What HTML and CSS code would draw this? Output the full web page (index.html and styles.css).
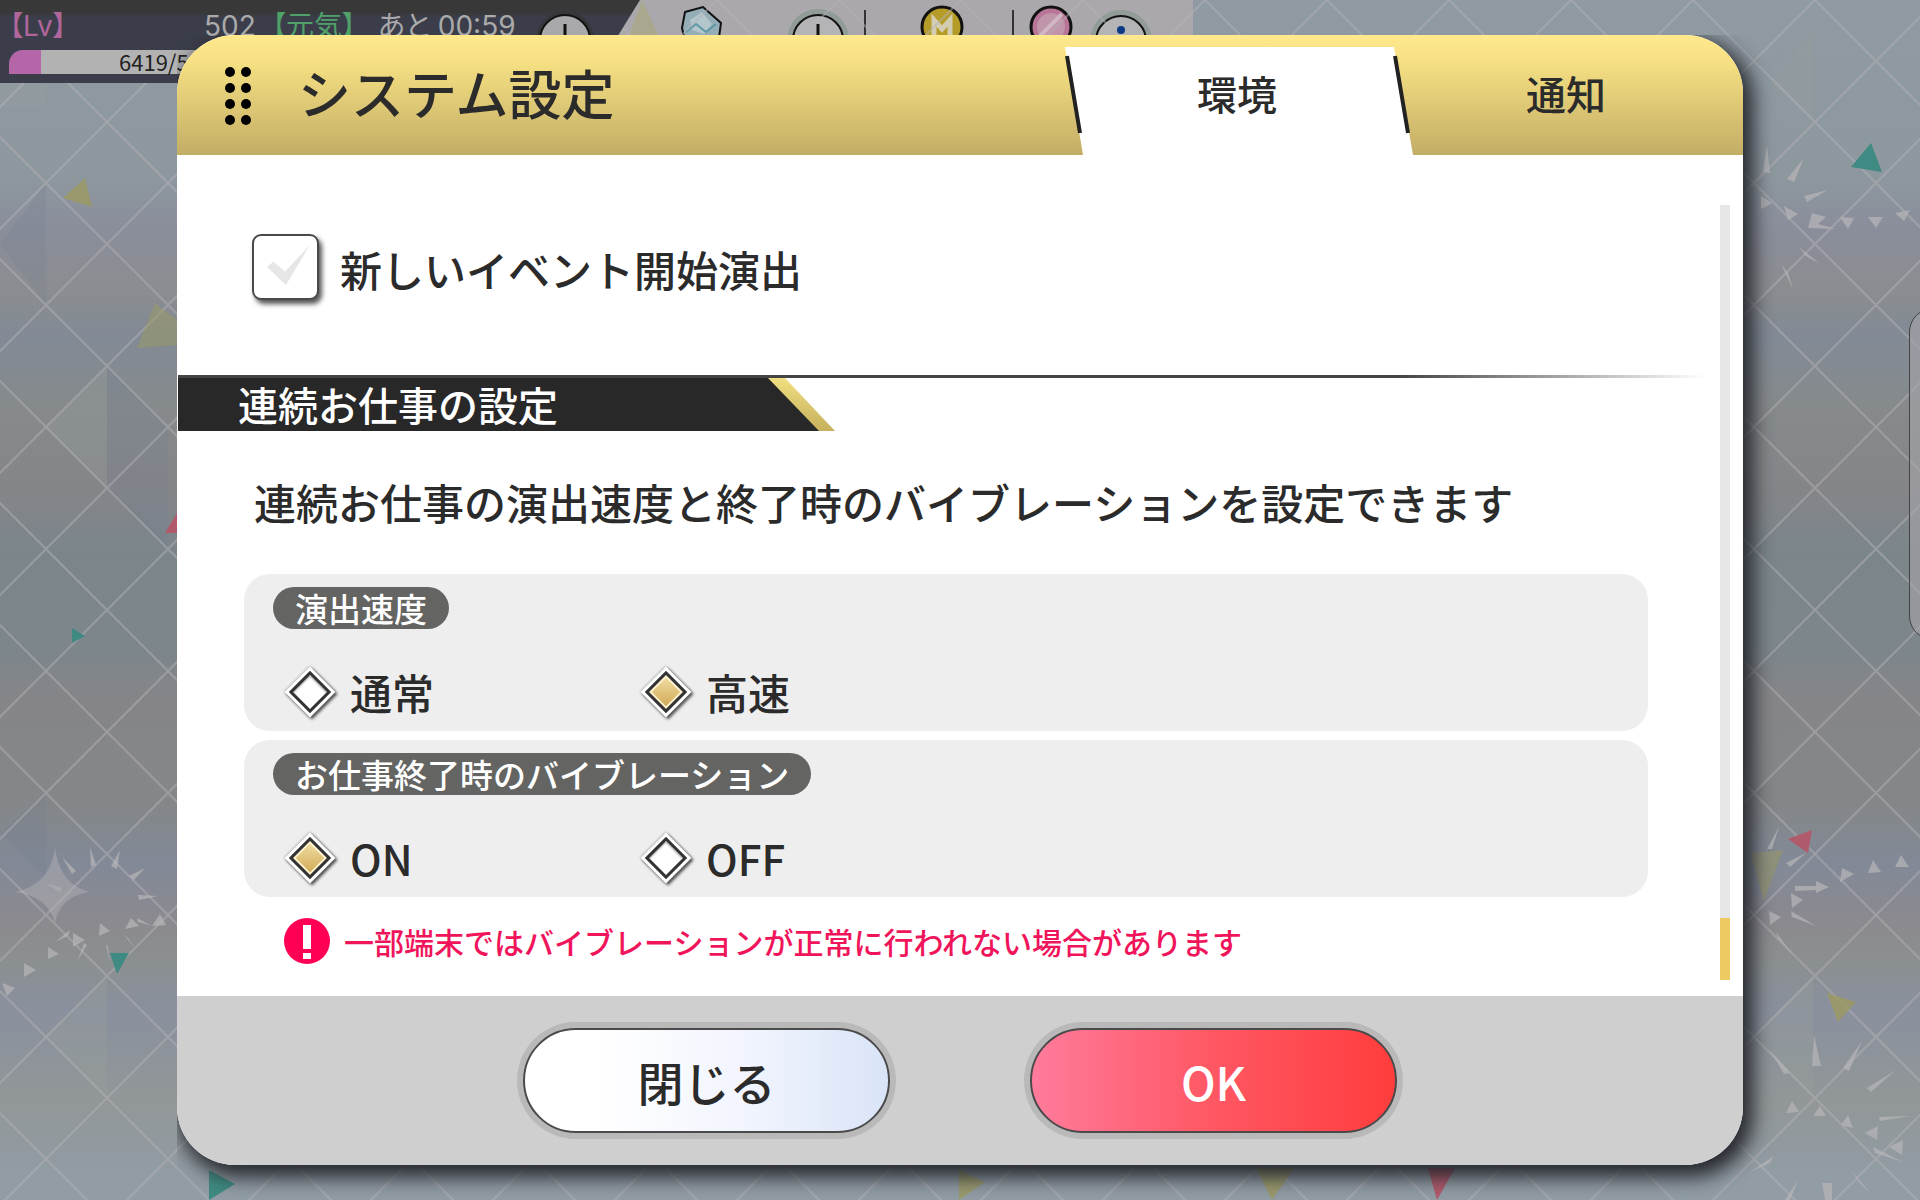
FILE: index.html
```
<!DOCTYPE html>
<html lang="ja">
  <head>
    <meta charset="UTF-8" />
    <meta name="viewport" content="width=device-width, initial-scale=1.0" />
    <title>システム設定</title>
    <link rel="stylesheet" href="styles.css">
  </head>
  <body>
    <!-- BACKGROUND -->
    <svg class="backdrop" viewBox="0 0 1920 1200" preserveAspectRatio="xMidYMid slice" aria-hidden="true">
      <defs>
        <pattern id="lattice" x="46" y="61" width="122" height="122" patternUnits="userSpaceOnUse">
          <path d="M0 0 122 122M122 0 0 122" stroke="#b4b2b6" stroke-opacity="0.5" stroke-width="2" />
        </pattern>
      </defs>
      <g fill="#9aa39c" opacity="0.25">
        <path d="M46 427 107 366V488zM46 1037 107 976V1098zM1813 976V1098L1752 1037z" />
        <path d="M0 83H46V106H0zM1813 30V120L1770 83z" />
      </g>
      <g fill="#6f7c90" opacity="0.18">
        <path d="M46 183V305L0 244zM168 427V549L107 488V366zM46 793V880L0 832z" />
      </g>
      <rect width="1920" height="1200" fill="url(#lattice)" />
      <g fill="#b5b4b7" opacity="0.75">
        <path d="M55 848Q60 885 90 892Q60 896 55 923Q48 896 15 892Q50 885 55 848z" opacity="0.6" />
        <path d="M62 857 76 871 72 874zM90 847 96 865 91 867zM120 850 117 869 111 866zM145 868 134 880 129 876zM158 896 139 900 138 895zM45 883 62 888 60 892z" />
        <path d="M100 923 110 931 99 936zM131 918 139 926 125 929zM160 914 166 925 152 926zM73 933 85 940 73 947zM48 947 59 954 48 959zM24 963 36 970 24 977zM2 983 15 988 7 996z" />
        <path d="M55 942 70 930 68 936zM78 960 87 945 84 943zM106 945 110 962 108 946zM124 935 136 949 128 938zM137 918 152 926 138 922z" />
        <path d="M1767 145 1770 173 1763 172zM1804 158 1794 182 1787 179zM1828 190 1807 202 1804 196zM1761 196 1772 203 1761 209zM1784 206 1798 214 1788 220zM1812 213 1826 217 1818 224 1836 229 1808 228z" />
        <path d="M1840 217 1854 218 1848 229zM1868 217 1883 217 1876 228zM1895 213 1910 210 1904 221zM1799 247 1820 264 1806 256zM1781 264 1793 289 1788 273z" />
        <path d="M1779 827 1772 849 1767 849zM1806 853 1790 867 1786 863zM1795 886H1816V881L1829 887 1816 893V890L1795 891zM1842 868 1854 874 1840 882zM1873 860 1881 872 1868 873zM1901 855 1909 867 1895 867z" />
        <path d="M1791 893 1803 900 1792 908zM1791 911 1816 926 1792 917zM1769 911 1781 917 1770 925zM1776 932 1793 955 1778 938zM1770 1050 1790 1073 1784 1074zM1814 1035 1821 1066 1812 1066z" />
        <path d="M1862 1041 1849 1071 1843 1068zM1896 1070 1871 1092 1867 1088zM1792 1101 1799 1112 1786 1113zM1820 1106 1826 1116 1813 1116zM1848 1115 1853 1128 1841 1125zM1879 1117 1910 1116 1880 1121z" />
        <path d="M1878 1126 1877 1140 1865 1133zM1903 1140 1902 1155 1889 1147zM1873 1147 1903 1162 1875 1153zM1774 1156 1750 1172 1770 1163zM1798 1180 1790 1200 1785 1200zM1822 1183H1832V1200H1825zM1852 1171 1872 1195 1858 1181z" />
      </g>
      <path fill="#3f8a82" d="M110 953H129L117 974zM209 1170 235 1184 209 1200zM72 628 85 636 72 643zM1871 143 1851 167 1882 172z" />
      <path fill="#9c9a62" opacity="0.8" d="M63 198 85 178 92 207zM959 1170 985 1182 959 1200zM1256 1168H1294L1272 1200zM1827 993 1856 1002 1838 1022z" />
      <path fill="#9c9a62" opacity="0.5" d="M137 348 155 303 177 320V345zM1750 853 1783 850 1764 900z" />
      <path fill="#b05a6c" d="M165 533 177 513V533zM1428 1168H1455L1437 1200zM1788 839 1812 830 1808 853z" />
    </svg>

    <!-- STATUS BAR -->
    <div class="status">
      <div class="status-left">
        <div class="status-row">
          <span class="level">【Lv】</span>
          <span class="level-value">502</span>
          <span class="energy">【元気】</span>
          <span class="timer">あと 00:59</span>
          <svg class="plus" width="60" height="60" viewBox="0 0 60 60" aria-hidden="true">
            <circle cx="30" cy="30" r="29" fill="#34363a" />
            <circle cx="30" cy="30" r="25" fill="#a9a9ab" stroke="#111" stroke-width="2" />
            <path d="M30 14V46M14 36H46" stroke="#111" stroke-width="3" />
          </svg>
        </div>
        <div class="exp">6419/5</div>
      </div>
      <svg class="wallet" width="573" height="60" viewBox="0 0 573 60" aria-hidden="true">
        <path d="M0 60 22 0 50 60z" fill="#aaa78f" />
        <path d="M65 12 83 7 101 23 98 45 66 45 62 28z" fill="#94adb6" stroke="#111" stroke-width="2" />
        <path d="M70 20 82 12 92 24 84 34 72 30z" fill="#b3c6cb" />
        <path d="M66 32 76 24 86 32 96 24" fill="none" stroke="#5b99a5" stroke-width="2" />
        <circle cx="198" cy="40" r="31" fill="#919b97" />
        <circle cx="198" cy="40" r="25" fill="#b4b4b6" stroke="#111" stroke-width="2" />
        <path d="M198 24V56M182 44H214" stroke="#111" stroke-width="3" />
        <path d="M245 10V36M393 10V36" stroke="#333" stroke-width="2" />
        <circle cx="322" cy="27" r="20" fill="#b59b28" stroke="#111" stroke-width="3" />
        <path d="M314 38V20L322 29 330 20V38" fill="none" stroke="#d2cdb0" stroke-width="5" />
        <circle cx="431" cy="27" r="20" fill="#b87598" stroke="#111" stroke-width="3" />
        <circle cx="431" cy="27" r="14" fill="#c094aa" />
        <path d="M420 36 442 14" stroke="#d0b5c3" stroke-width="4" />
        <circle cx="501" cy="41" r="31" fill="#919b97" />
        <circle cx="501" cy="41" r="25" fill="#b4b4b6" stroke="#111" stroke-width="2" />
        <circle cx="501" cy="30" r="4" fill="#0d3a86" />
      </svg>
    </div>
    <div class="side-handle"></div>

    <!-- DIALOG -->
    <main class="dialog">
      <header class="dialog-header">
        <svg class="grip" width="28" height="60" viewBox="0 0 28 60" aria-hidden="true">
          <circle cx="6" cy="6" r="5" /><circle cx="22" cy="6" r="5" />
          <circle cx="6" cy="22" r="5" /><circle cx="22" cy="22" r="5" />
          <circle cx="6" cy="38" r="5" /><circle cx="22" cy="38" r="5" />
          <circle cx="6" cy="54" r="5" /><circle cx="22" cy="54" r="5" />
        </svg>
        <h1>システム設定</h1>
        <nav class="tabs">
          <button type="button" class="tab active">環境</button>
          <button type="button" class="tab">通知</button>
          <svg class="tab-edges" width="346" height="80" viewBox="0 0 346 80" aria-hidden="true">
            <path d="M2 1 15 78M330 1 343 78" stroke="#222" stroke-width="4" />
          </svg>
        </nav>
      </header>

      <div class="dialog-body">
        <div class="panel">
          <div class="event-row">
            <input type="checkbox" id="newEvent">
            <label for="newEvent">新しいイベント開始演出</label>
          </div>

          <div class="section">
            <h2>連続お仕事の設定</h2>
          </div>

          <p class="description">連続お仕事の演出速度と終了時のバイブレーションを設定できます</p>

          <div class="group" role="radiogroup" aria-labelledby="speedTitle">
            <h3 id="speedTitle">演出速度</h3>
            <div class="options">
              <label><input type="radio" name="speed">通常</label>
              <label><input type="radio" name="speed" checked>高速</label>
            </div>
          </div>

          <div class="group" role="radiogroup" aria-labelledby="vibrationTitle">
            <h3 id="vibrationTitle">お仕事終了時のバイブレーション</h3>
            <div class="options">
              <label><input type="radio" name="vibration" checked>ON</label>
              <label><input type="radio" name="vibration">OFF</label>
            </div>
          </div>

          <p class="warning">
            <svg width="46" height="46" viewBox="0 0 46 46" aria-hidden="true">
              <circle cx="23" cy="23" r="23" fill="#ff0055" />
              <path d="M19 7H27V31H19zM19 35H27V41H19z" fill="#fff" />
            </svg>
            一部端末ではバイブレーションが正常に行われない場合があります
          </p>
        </div>
        <div class="scrollbar"><div class="thumb"></div></div>
      </div>

      <footer class="dialog-footer">
        <button type="button" class="btn btn-close">閉じる</button>
        <button type="button" class="btn btn-ok">OK</button>
      </footer>
    </main>
  </body>
</html>
```

FILE: styles.css
```
* {
  margin: 0;
  padding: 0;
  box-sizing: border-box;
}
body {
  min-height: 100vh;
  overflow: hidden;
  position: relative;
  display: flex;
  font-family: "Noto Sans CJK JP", sans-serif;
  font-weight: 500;
  color: #2b2b2b;
  background: linear-gradient(
    #8f9aa2 0%,
    #8d979e 15%,
    #8a8e9b 19%,
    #8b8d90 24%,
    #828a95 28%,
    #868a8c 34%,
    #848589 41%,
    #7b868b 46%,
    #7c868b 54%,
    #858589 58%,
    #848789 67%,
    #828997 72%,
    #8b8a8f 77%,
    #8b8f90 80%,
    #8a909d 84%,
    #929798 92%,
    #919ca4 98%
  );
}
button,
input {
  font: inherit;
  color: inherit;
}

/* BACKGROUND */
.backdrop {
  position: absolute;
  inset: 0;
  width: 100%;
  height: 100%;
}

/* STATUS BAR */
.status {
  position: absolute;
  top: 0;
  left: 0;
  display: flex;
}
.status-left {
  width: 640px;
  height: 83px;
  background: linear-gradient(#383838 13px, #3b3e4a 17px);
  clip-path: polygon(0 0, 100% 0, 92% 100%, 0 100%);
}
.status-row {
  display: flex;
  height: 50px;
  padding: 8px 0 0 9px;
  font-family: Inter, "Noto Sans CJK JP", sans-serif;
  font-size: 28px;
  font-weight: 400;
  font-feature-settings: "palt";
  line-height: 36px;
  color: #aaa;
  white-space: nowrap;
}
.level {
  width: 195px;
  color: #b0669b;
}
.level-value {
  width: 68px;
}
.energy {
  width: 106px;
  color: #4fa169;
}
.timer {
  width: 157px;
}
.plus {
  flex: none;
  margin-top: 2px;
}
.exp {
  height: 24px;
  margin-left: 9px;
  padding-left: 110px;
  border-radius: 14px 0 0 0;
  background: linear-gradient(90deg, #b466a8 32px, #b2b2b2 32px);
  font-size: 22px;
  font-weight: 400;
  line-height: 22px;
  color: #222;
}
.wallet {
  z-index: -1;
  margin-left: -20px;
  background: #aaa8ac;
}
.side-handle {
  position: absolute;
  top: 308px;
  right: -40px;
  width: 51px;
  height: 332px;
  border: 1px solid #444;
  border-radius: 24px;
  background: rgba(165, 165, 170, 0.6);
}

/* DIALOG */
.dialog {
  position: relative;
  flex: 1;
  display: flex;
  flex-direction: column;
  margin: 35px 177px;
  border-radius: 58px;
  overflow: hidden;
  background: #fff;
  box-shadow: 6px 8px 20px 4px #24262c;
  clip-path: inset(0 -50px -50px 0);
}
.dialog-header {
  display: flex;
  height: 120px;
  padding-left: 47px;
  background: linear-gradient(#ffe98d, #f6e083 22%, #c2ad66);
}
.grip {
  margin-top: 31px;
}
.dialog-header h1 {
  flex: 1;
  margin-left: 46px;
  font-size: 53px;
  font-weight: 500;
  line-height: 114px;
}
.tabs {
  position: relative;
  display: flex;
}
.tab {
  width: 330px;
  padding: 0 24px 4px 0;
  border: none;
  background: none;
  font-size: 40px;
  cursor: pointer;
}
.tab.active {
  width: 348px;
  margin-top: 12px;
  padding: 0 4px 16px 0;
  background: #fff;
  clip-path: polygon(0 0, 329px 0, 100% 100%, 18px 100%);
}
.tab-edges {
  position: absolute;
  top: 20px;
  left: 0;
}
.dialog-body {
  flex: 1;
  display: flex;
}
.panel {
  flex: 1;
  padding-bottom: 32px;
}
.scrollbar {
  display: flex;
  align-items: flex-end;
  width: 10px;
  margin: 50px 13px 16px 0;
  background: #e7e7e7;
}
.thumb {
  width: 100%;
  height: 62px;
  background: #edcb62;
}

.event-row {
  display: flex;
  gap: 21px;
  padding: 79px 75px 71px;
  font-size: 42px;
  line-height: 70px;
}
.event-row input {
  appearance: none;
  width: 67px;
  height: 66px;
  border: 2px solid #4a4a4a;
  border-radius: 9px;
  background: #fff;
  box-shadow: 3px 4px 5px #555;
}
.event-row input::before {
  content: "";
  display: block;
  width: 43px;
  height: 40px;
  margin: 9px 0 0 13px;
  background: #e6e6e6;
  clip-path: polygon(0 55%, 15% 42%, 42% 66%, 100% 0, 44% 100%);
}

/* SECTION HEADING */
.section {
  margin: 0 15px 0 1px;
  padding-top: 3px;
  background: linear-gradient(90deg, #444 80%, #fff) top / 100% 3px no-repeat;
}
.section h2 {
  position: relative;
  isolation: isolate;
  width: 657px;
  padding-left: 60px;
  font-size: 40px;
  font-weight: 500;
  line-height: 53px;
  color: #fff;
  background: linear-gradient(#f0df80, #c6b05d);
  clip-path: polygon(0 0, 607px 0, 100% 100%, 0 100%);
}
.section h2::before {
  content: "";
  position: absolute;
  inset: 0;
  z-index: -1;
  background: #282828;
  clip-path: polygon(0 0, 590px 0, 641px 100%, 0 100%);
}

.description {
  margin: 41px 0 42px 77px;
  font-size: 42px;
  line-height: 60px;
}

/* OPTION GROUPS */
.group {
  margin: 0 72px 9px 67px;
  padding: 13px 29px 14px;
  border-radius: 26px;
  background: #eee;
}
.group h3 {
  width: fit-content;
  margin-bottom: 38px;
  padding: 0 22px;
  border-radius: 21px;
  font-size: 33px;
  font-weight: 500;
  line-height: 42px;
  color: #fff;
  background: #646462;
}
.options {
  display: flex;
  padding-left: 19px;
}
.options label {
  display: flex;
  align-items: center;
  gap: 22px;
  width: 356px;
  font-size: 42px;
  line-height: 50px;
}
.options input {
  appearance: none;
  display: grid;
  place-items: center;
  width: 36px;
  height: 36px;
  background: #fff;
  box-shadow: 3px 0 3px #555, 0 0 3px #888;
  transform: rotate(45deg);
}
.options input::before {
  content: "";
  width: 24px;
  height: 24px;
  border: 3px solid #333;
  background: #fff;
  box-shadow: inset 1px 1px 2px #aaa;
}
.options input:checked::before {
  background: linear-gradient(135deg, #f3dfa6, #cfa752);
  box-shadow: inset 0 0 0 2px #fff3cf;
}

.warning {
  display: flex;
  align-items: center;
  gap: 14px;
  margin: 21px 0 0 107px;
  font-size: 30px;
  line-height: 46px;
  color: #f0145a;
}

/* FOOTER */
.dialog-footer {
  display: flex;
  justify-content: center;
  gap: 140px;
  padding: 32px 0;
  background: #cfcfcf;
}
.btn {
  width: 367px;
  height: 105px;
  border: 2px solid #4a4a4a;
  border-radius: 53px;
  box-shadow: 0 0 0 6px #b9b9b9;
  font-size: 46px;
  cursor: pointer;
}
.btn-close {
  background: linear-gradient(90deg, #fff 20%, #f2f5fe 60%, #d9e4f7);
}
.btn-ok {
  color: #fff;
  background: linear-gradient(90deg, #ff7b9c, #ff5763 50%, #ff3d3d);
}
```
